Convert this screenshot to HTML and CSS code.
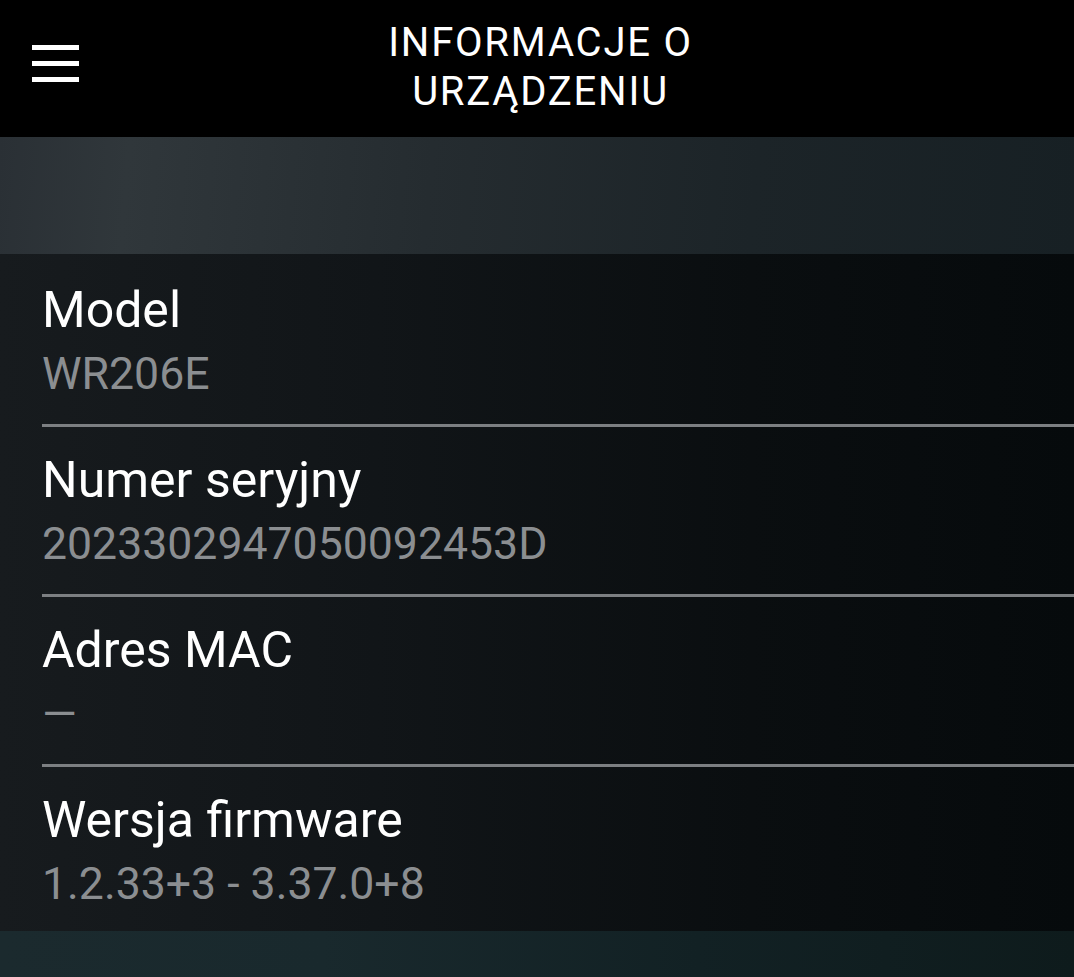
FILE: index.html
```html
<!DOCTYPE html>
<html lang="pl">
<head>
<meta charset="utf-8">
<title>Informacje o urządzeniu</title>
<link rel="stylesheet" href="styles.css">
</head>
<body>
<div class="screen">
  <header class="toolbar">
    <div class="menu-cell">
      <div class="hamburger"><span></span><span></span><span></span></div>
    </div>
    <h1 class="title">INFORMACJE O URZĄDZENIU</h1>
    <div class="spacer"></div>
  </header>
  <div class="band"></div>
  <main class="list">
    <div class="row">
      <div class="label">Model</div>
      <div class="value">WR206E</div>
    </div>
    <div class="row">
      <div class="label">Numer seryjny</div>
      <div class="value">2023302947050092453D</div>
    </div>
    <div class="row">
      <div class="label">Adres MAC</div>
      <div class="value">—</div>
    </div>
    <div class="row">
      <div class="label">Wersja firmware</div>
      <div class="value">1.2.33+3 - 3.37.0+8</div>
    </div>
  </main>
  <div class="footer-strip"></div>
</div>
</body>
</html>
```
FILE: styles.css
```css
html, body {
  margin: 0;
  padding: 0;
  background: #000;
}
body {
  font-family: Roboto, "Noto Sans", "Liberation Sans", sans-serif;
  color: #fff;
}
.screen {
  width: 1074px;
  height: 977px;
  display: flex;
  flex-direction: column;
  overflow: hidden;
}
.toolbar {
  height: 137px;
  flex: 0 0 137px;
  box-sizing: border-box;
  background: #000;
  display: grid;
  grid-template-columns: 1fr auto 1fr;
  align-items: start;
}
.menu-cell {
  padding: 45px 0 0 32px;
}
.hamburger {
  width: 47px;
  display: flex;
  flex-direction: column;
  gap: 11px;
}
.hamburger span {
  display: block;
  height: 5px;
  background: #fff;
}
.title {
  margin: 0 0 0 7px;
  padding-top: 18px;
  width: 340px;
  text-align: center;
  font-weight: 400;
  font-size: 40px;
  line-height: 49px;
  letter-spacing: 1.8px;
  color: #fff;
}
.band {
  flex: 0 0 117px;
  background: linear-gradient(95deg, #2a3035 0%, #30373b 12%, #252c30 40%, #1c2428 70%, #172024 100%);
}
.list {
  padding-top: 3px;
  background: linear-gradient(90deg, #171b1e 0%, #111518 35%, #0a0e10 70%, #060a0c 100%);
  display: flex;
  flex-direction: column;
}
.row {
  margin-left: 42px;
  padding: 23px 0 22px 0;
  border-bottom: 3px solid #7c7f82;
}
.row:last-child {
  border-bottom: none;
  padding-bottom: 19px;
}
.label {
  font-size: 50px;
  line-height: 60px;
  margin-bottom: 6px;
  color: #fff;
}
.value {
  font-size: 44.6px;
  line-height: 56px;
  color: #8b8e91;
}
.footer-strip {
  flex: 1 1 auto;
  background: linear-gradient(90deg, #1b2a2e 0%, #19292d 30%, #122124 65%, #0e1b1c 100%);
}
```
